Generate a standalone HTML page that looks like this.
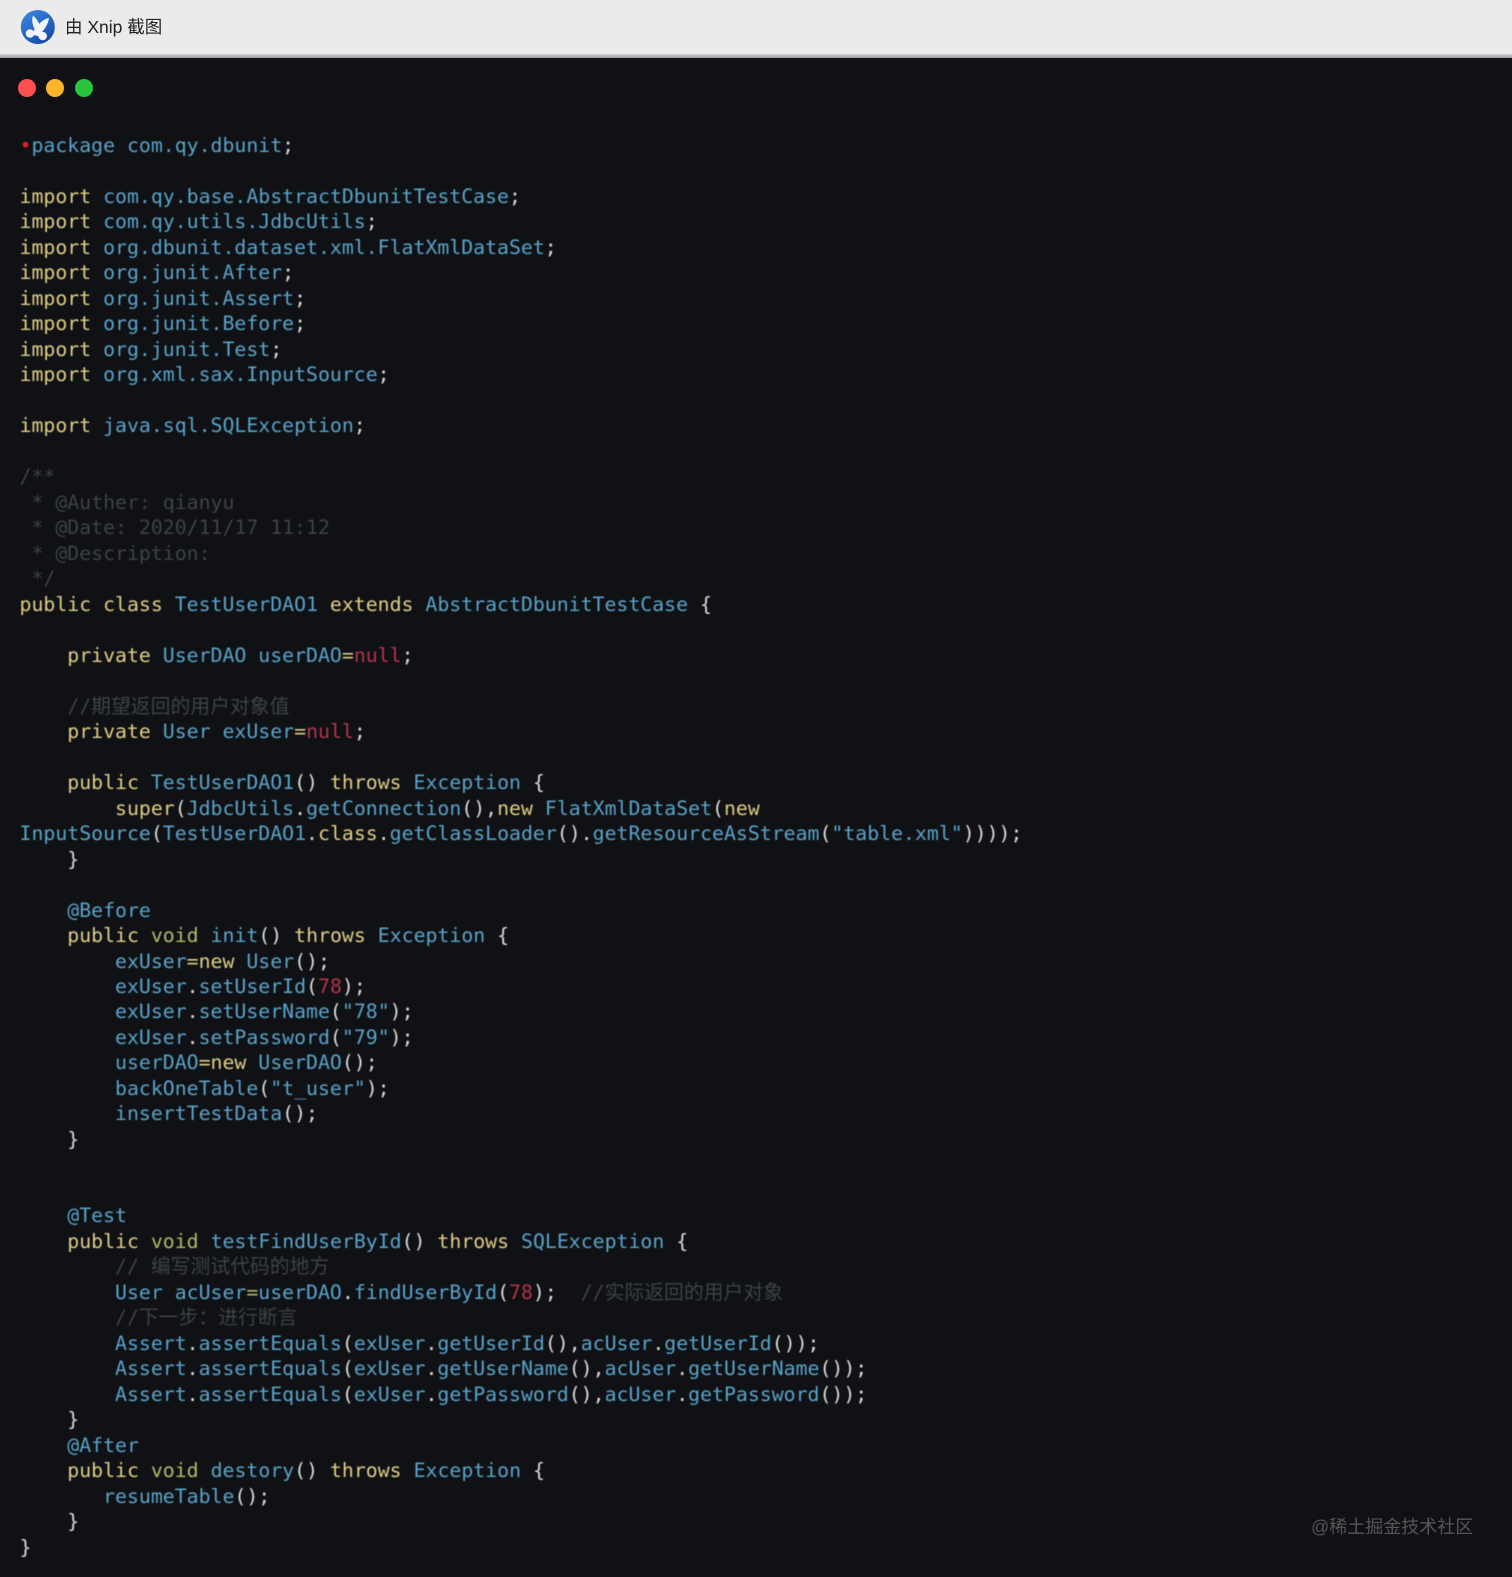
<!DOCTYPE html>
<html><head><meta charset="utf-8">
<style>
html,body{margin:0;padding:0;background:#0f1114;}
body{width:1512px;height:1576px;position:relative;overflow:hidden;}
#hd{position:absolute;left:0;top:0;width:1512px;height:54px;background:#ebebeb;}
#sh{position:absolute;left:0;top:54px;width:1512px;height:4px;background:linear-gradient(#d4d4d4,#9a9a9a);}
#bg{position:absolute;left:0;top:57.5px;width:1512px;height:1519px;background:#0f1114;border-radius:4px 4px 0 0;}
#t{position:absolute;left:65px;top:16px;font:17.5px/22px "Liberation Sans","Noto Sans CJK SC",sans-serif;color:#222;white-space:pre;}
.d{position:absolute;top:79px;width:18px;height:18px;border-radius:50%;}
pre{position:absolute;left:19.5px;top:133px;margin:0;font-family:"DejaVu Sans Mono","Noto Sans CJK SC",monospace;font-size:19.84px;line-height:25.48px;filter:blur(.4px);color:#5aa4ca;}
i{font-style:normal;color:#e0ce86;}
b{font-weight:normal;color:#dcdcdc;}
u{text-decoration:none;color:#3f4246;}
s{text-decoration:none;color:#b5344c;}
em{font-style:normal;color:#b0bc6a;}
#w{position:absolute;left:1311px;top:1514.500px;font:18px/24px "Liberation Sans","Noto Sans CJK SC",sans-serif;color:#565656;white-space:pre;filter:blur(.3px);}
</style></head><body>
<div id="hd"></div><div id="sh"></div><div id="bg"></div>
<svg style="position:absolute;left:19px;top:9px" width="38" height="38" viewBox="0 0 38 38">
<defs><linearGradient id="g" x1="0.2" y1="0" x2="0.8" y2="1"><stop offset="0" stop-color="#3a86e0"/><stop offset="1" stop-color="#1146a8"/></linearGradient></defs>
<circle cx="18.800" cy="18" r="17" fill="url(#g)"/>
<path d="M14 6.500 C12 12 14 18 18 25 L23 22 C21 15 18 10 14 6.500 Z" fill="#f1f4fa"/>
<path d="M30 9 C24 10 19 15 14 23 L19 26 C25 22 29 16 30 9 Z" fill="#f1f4fa"/>
<circle cx="11" cy="24.500" r="4.300" fill="#f1f4fa"/>
<circle cx="23.700" cy="27" r="4.300" fill="#f1f4fa"/>
<path d="M14 24 L22 26" stroke="#f1f4fa" stroke-width="3.500"/>
</svg>
<div id="t">由 Xnip 截图</div>
<div class="d" style="left:18px;background:#ff4f4f"></div>
<div class="d" style="left:46px;background:#ffb429"></div>
<div class="d" style="left:74.500px;background:#29c53f"></div>
<pre><span style="color:#e0202a">•</span>package com.qy.dbunit<b>;</b>

<i>import</i> com.qy.base.AbstractDbunitTestCase<b>;</b>
<i>import</i> com.qy.utils.JdbcUtils<b>;</b>
<i>import</i> org.dbunit.dataset.xml.FlatXmlDataSet<b>;</b>
<i>import</i> org.junit.After<b>;</b>
<i>import</i> org.junit.Assert<b>;</b>
<i>import</i> org.junit.Before<b>;</b>
<i>import</i> org.junit.Test<b>;</b>
<i>import</i> org.xml.sax.InputSource<b>;</b>

<i>import</i> java.sql.SQLException<b>;</b>

<u>/**
 * @Auther: qianyu
 * @Date: 2020/11/17 11:12
 * @Description:
 */</u>
<i>public class</i> TestUserDAO1 <i>extends</i> AbstractDbunitTestCase <b>{</b>

    <i>private</i> UserDAO userDAO<i>=</i><s>null</s><b>;</b>

    <u>//期望返回的用户对象值</u>
    <i>private</i> User exUser<i>=</i><s>null</s><b>;</b>

    <i>public</i> TestUserDAO1<b>()</b> <i>throws</i> Exception <b>{</b>
        <i>super</i><b>(</b>JdbcUtils<b>.</b>getConnection<b>(),</b><i>new</i> FlatXmlDataSet<b>(</b><i>new</i>
InputSource<b>(</b>TestUserDAO1<b>.</b><i>class</i><b>.</b>getClassLoader<b>().</b>getResourceAsStream<b>(</b>"table.xml"<b>))));</b>
    <b>}</b>

    @Before
    <i>public</i> <em>void</em> init<b>()</b> <i>throws</i> Exception <b>{</b>
        exUser<i>=new</i> User<b>();</b>
        exUser<b>.</b>setUserId<b>(</b><s>78</s><b>);</b>
        exUser<b>.</b>setUserName<b>(</b>"78"<b>);</b>
        exUser<b>.</b>setPassword<b>(</b>"79"<b>);</b>
        userDAO<i>=new</i> UserDAO<b>();</b>
        backOneTable<b>(</b>"t_user"<b>);</b>
        insertTestData<b>();</b>
    <b>}</b>


    @Test
    <i>public</i> <em>void</em> testFindUserById<b>()</b> <i>throws</i> SQLException <b>{</b>
        <u>// 编写测试代码的地方</u>
        User acUser<em>=</em>userDAO<b>.</b>findUserById<b>(</b><s>78</s><b>);</b>  <u>//实际返回的用户对象</u>
        <u>//下一步：进行断言</u>
        Assert<b>.</b>assertEquals<b>(</b>exUser<b>.</b>getUserId<b>(),</b>acUser<b>.</b>getUserId<b>());</b>
        Assert<b>.</b>assertEquals<b>(</b>exUser<b>.</b>getUserName<b>(),</b>acUser<b>.</b>getUserName<b>());</b>
        Assert<b>.</b>assertEquals<b>(</b>exUser<b>.</b>getPassword<b>(),</b>acUser<b>.</b>getPassword<b>());</b>
    <b>}</b>
    @After
    <i>public</i> <em>void</em> destory<b>()</b> <i>throws</i> Exception <b>{</b>
       resumeTable<b>();</b>
    <b>}</b>
<b>}</b></pre>
<div id="w">@稀土掘金技术社区</div>
</body></html>
